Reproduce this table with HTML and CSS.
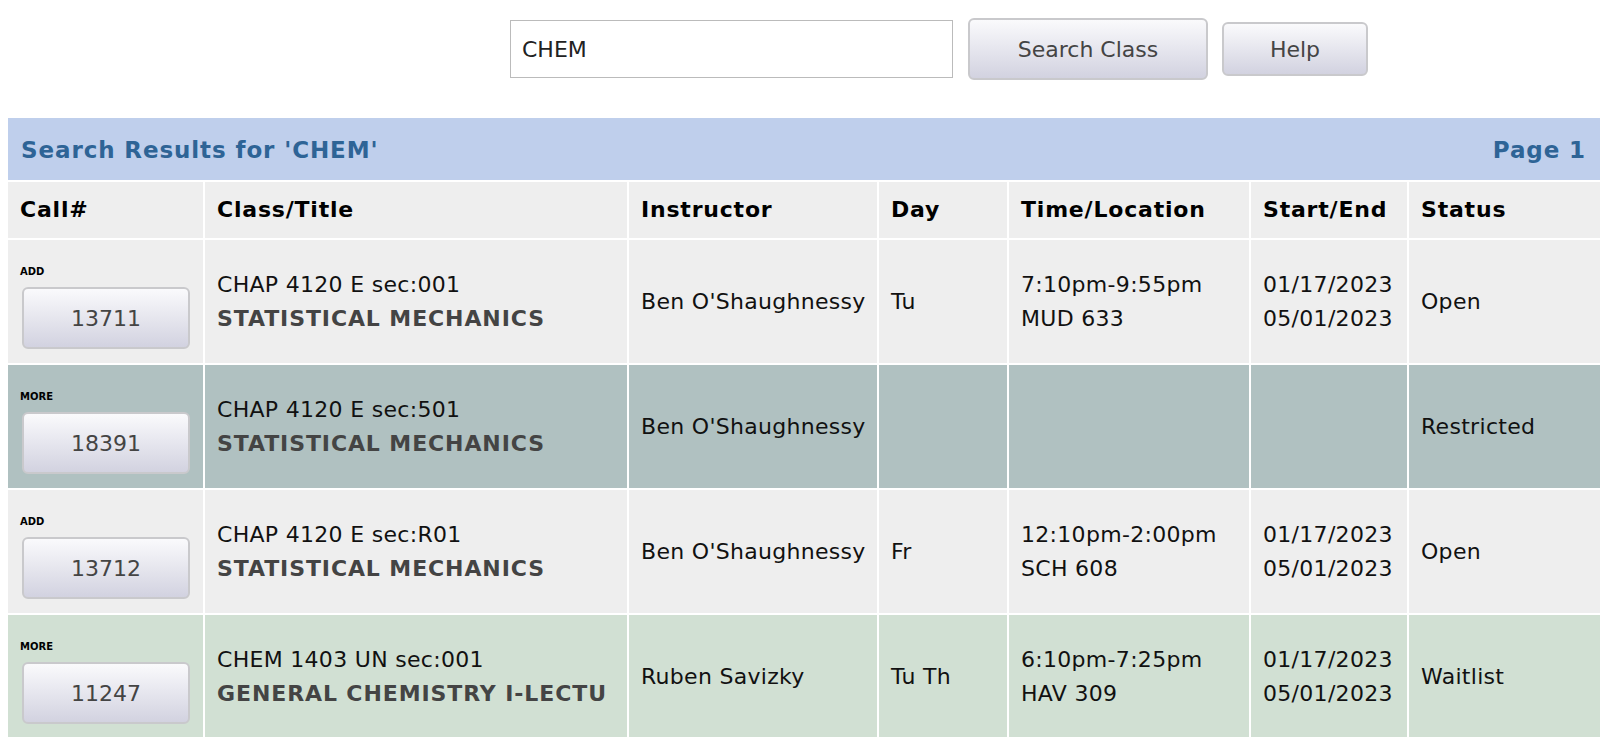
FILE: index.html
```html
<!DOCTYPE html>
<html lang="en">
<head>
    <meta charset="UTF-8">
    <title>Class Search</title>
    <link rel="stylesheet" href="styles.css">
</head>
<body>

<div class="search-bar">
    <input type="text" class="search-input" value="CHEM">
    <button class="btn btn-search">Search Class</button>
    <button class="btn btn-help">Help</button>
</div>

<table class="results">
    <colgroup>
        <col class="w-call">
        <col class="w-title">
        <col class="w-instr">
        <col class="w-day">
        <col class="w-time">
        <col class="w-date">
        <col>
    </colgroup>
    <thead>
        <tr>
            <th colspan="7" class="band">
                <div class="band-inner">
                    <span>Search Results for 'CHEM'</span>
                    <span>Page 1</span>
                </div>
            </th>
        </tr>
        <tr class="head-row">
            <th>Call#</th>
            <th>Class/Title</th>
            <th>Instructor</th>
            <th>Day</th>
            <th>Time/Location</th>
            <th>Start/End</th>
            <th>Status</th>
        </tr>
    </thead>
    <tbody>
        <tr class="row-open">
            <td class="call">
                <div class="call-label">ADD</div>
                <button class="call-btn">13711</button>
            </td>
            <td>CHAP 4120 E sec:001<br><span class="title">STATISTICAL MECHANICS</span></td>
            <td>Ben O'Shaughnessy</td>
            <td>Tu</td>
            <td>7:10pm-9:55pm<br>MUD 633</td>
            <td>01/17/2023<br>05/01/2023</td>
            <td>Open</td>
        </tr>
        <tr class="row-restricted">
            <td class="call">
                <div class="call-label">MORE</div>
                <button class="call-btn">18391</button>
            </td>
            <td>CHAP 4120 E sec:501<br><span class="title">STATISTICAL MECHANICS</span></td>
            <td>Ben O'Shaughnessy</td>
            <td></td>
            <td></td>
            <td></td>
            <td>Restricted</td>
        </tr>
        <tr class="row-open">
            <td class="call">
                <div class="call-label">ADD</div>
                <button class="call-btn">13712</button>
            </td>
            <td>CHAP 4120 E sec:R01<br><span class="title">STATISTICAL MECHANICS</span></td>
            <td>Ben O'Shaughnessy</td>
            <td>Fr</td>
            <td>12:10pm-2:00pm<br>SCH 608</td>
            <td>01/17/2023<br>05/01/2023</td>
            <td>Open</td>
        </tr>
        <tr class="row-waitlist">
            <td class="call">
                <div class="call-label">MORE</div>
                <button class="call-btn">11247</button>
            </td>
            <td>CHEM 1403 UN sec:001<br><span class="title">GENERAL CHEMISTRY I-LECTU</span></td>
            <td>Ruben Savizky</td>
            <td>Tu Th</td>
            <td>6:10pm-7:25pm<br>HAV 309</td>
            <td>01/17/2023<br>05/01/2023</td>
            <td>Waitlist</td>
        </tr>
    </tbody>
</table>

</body>
</html>
```

FILE: styles.css
```css
* {
    box-sizing: border-box;
}
html {
    overflow: hidden;
}
body {
    margin: 0 0 0 8px;
    font-family: "DejaVu Sans", Verdana, sans-serif;
    font-size: 22px;
    color: #111;
    background-color: white;
}
.search-bar {
    display: flex;
    align-items: center;
    height: 98px;
    padding-left: 502px;
}
.search-input {
    width: 443px;
    height: 58px;
    padding: 0 11px;
    border: 1px solid #bbb;
    font-family: inherit;
    font-size: 22px;
    color: #222;
}
.btn {
    font-family: inherit;
    font-size: 22px;
    color: #444;
    border: 2px solid #c9c9cc;
    border-radius: 6px;
    background: linear-gradient(#fafafc, #d2d2e0);
}
.btn-search {
    width: 240px;
    height: 62px;
    margin-left: 15px;
}
.btn-help {
    width: 146px;
    height: 54px;
    margin-left: 14px;
}
.results {
    width: 1596px;
    margin: 18px 0 0 -2px;
    border-collapse: separate;
    border-spacing: 2px;
    table-layout: fixed;
}
.w-call { width: 195px; }
.w-title { width: 422px; }
.w-instr { width: 248px; }
.w-day { width: 128px; }
.w-time { width: 240px; }
.w-date { width: 156px; }
.band {
    background-color: #bfcfec;
    padding: 0;
}
.band-inner {
    display: flex;
    justify-content: space-between;
    padding: 15px 14px 13px 13px;
    font-size: 23px;
    line-height: 34px;
    letter-spacing: 0.9px;
    font-weight: bold;
    color: #2e6496;
}
th, td {
    padding: 0 12px;
    line-height: 34px;
    text-align: left;
    vertical-align: middle;
    white-space: nowrap;
    overflow: hidden;
    letter-spacing: 0.3px;
}
.head-row th {
    height: 56px;
    background-color: #eeeeee;
    color: #000;
    letter-spacing: 0.8px;
}
.row-open td {
    background-color: #eeeeee;
}
.row-restricted td {
    background-color: #b0c1c1;
}
.row-waitlist td {
    background-color: #d1e0d3;
}
.title {
    font-weight: bold;
    color: #444;
    letter-spacing: 0.9px;
}
td.call {
    vertical-align: top;
    padding: 25px 12px 14px;
}
.call-label {
    font-size: 10px;
    line-height: 14px;
    font-weight: bold;
    color: #000;
    letter-spacing: 0;
}
.call-btn {
    display: block;
    width: 168px;
    height: 62px;
    margin: 8px 0 0 2px;
    font-family: inherit;
    font-size: 22px;
    color: #444;
    border: 2px solid #c9c9cc;
    border-radius: 6px;
    background: linear-gradient(#fafafc, #d2d2e0);
}
```
